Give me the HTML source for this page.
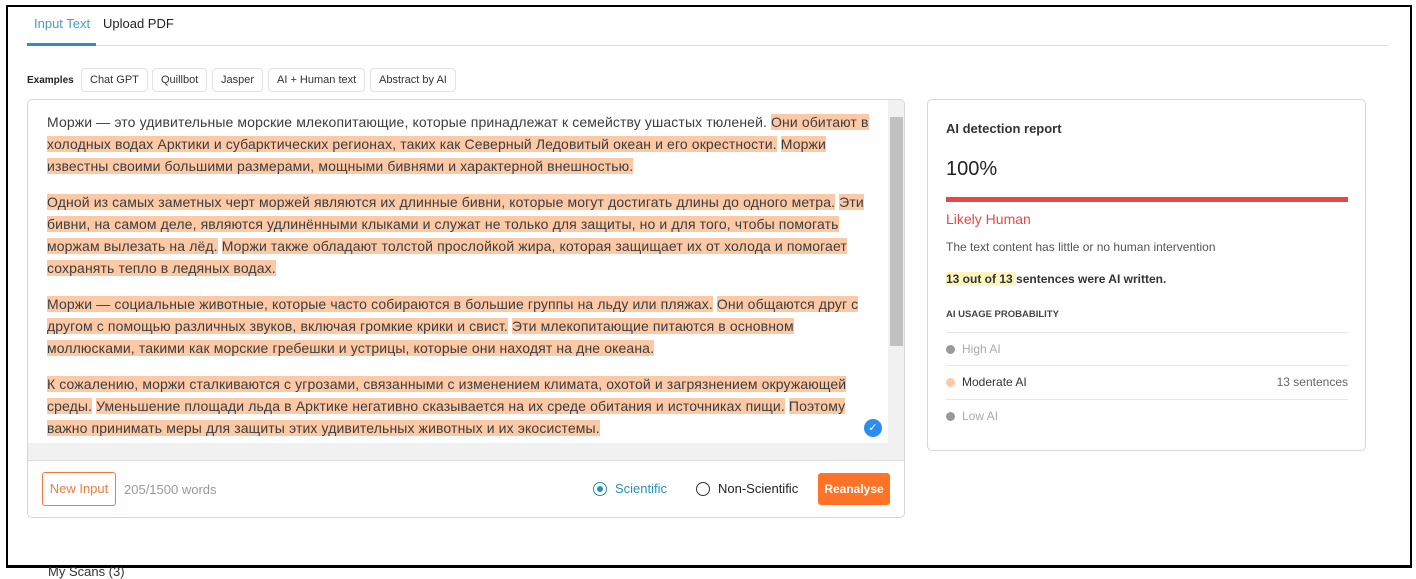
<!DOCTYPE html>
<html><head><meta charset="utf-8"><style>
*{box-sizing:border-box;margin:0;padding:0}
body{width:1416px;height:573px;background:#fff;font-family:"Liberation Sans",sans-serif;position:relative;overflow:hidden;color:#333}
.frame{position:absolute;left:6px;top:5px;width:1406px;height:563px;border:2px solid #000;border-bottom-width:3px}
.tabs{position:absolute;left:27px;top:0;width:1361px;height:46px;border-bottom:1px solid #ddd}
.tab{position:absolute;top:16px;font-size:13px}
.t1{left:7px;color:#4a9cc0}
.t2{left:76px;color:#222}
.uline{position:absolute;left:27px;top:43px;width:69px;height:3px;background:#2b91b8}
.ex{position:absolute;top:68px;height:24px;border:1px solid #e3e3e3;border-radius:4px;font-size:11px;color:#333;line-height:22px;padding:0 8px}
.exl{position:absolute;left:27px;top:75px;font-size:10px;font-weight:bold;color:#222}
.box{position:absolute;left:27px;top:99px;width:878px;height:419px;border:1px solid #d6d6d6;border-radius:5px;overflow:hidden}
.txt{position:absolute;left:19px;top:11px;font-size:14px;line-height:22px;color:#3d3d3d;white-space:nowrap;letter-spacing:0.12px}
.txt p{margin-bottom:14px}
.h{background:#fcc9a6}
.vs{position:absolute;left:860px;top:0;width:16px;height:343px;background:#f1f1f1}
.thumb{position:absolute;left:2px;top:17px;width:13px;height:229px;background:#c1c1c1}
.hs{position:absolute;left:0;top:343px;width:876px;height:18px;background:#f1f1f1;border-bottom:1px solid #ddd}
.chk{position:absolute;left:836px;top:319px;width:18px;height:18px;border-radius:50%;background:#2d8cf0;color:#fff;font-size:11px;text-align:center;line-height:18px}
.btn1{position:absolute;left:14px;top:372px;width:74px;height:34px;border:1px solid #f47a3c;border-radius:3px;color:#f47a3c;font-size:13px;text-align:center;line-height:32px}
.words{position:absolute;left:96px;top:382px;font-size:13px;color:#999}
.radio{position:absolute;top:382px;width:14px;height:14px;border-radius:50%;border:1px solid #333}
.lab{position:absolute;top:381px;font-size:13px}
.rean{position:absolute;left:790px;top:373px;width:72px;height:32px;background:#ff7326;border-radius:3px;color:#fff;font-size:12px;font-weight:bold;text-align:center;line-height:32px}
.rp{position:absolute;left:927px;top:99px;width:439px;height:352px;border:1px solid #d6d6d6;border-radius:5px}
.rp .a{position:absolute;left:18px}
.row{position:absolute;left:18px;width:402px;border-top:1px solid #e6e6e6;height:33px;font-size:12px;line-height:33px}
.dot{display:inline-block;width:9px;height:9px;border-radius:50%;margin-right:7px;vertical-align:-1px}
</style></head><body>
<div class="tabs"><span class="tab t1">Input Text</span><span class="tab t2">Upload PDF</span></div>
<div class="uline"></div>
<div class="exl">Examples</div>
<div class="ex" style="left:81px">Chat GPT</div>
<div class="ex" style="left:152px">Quillbot</div>
<div class="ex" style="left:212px">Jasper</div>
<div class="ex" style="left:268px">AI + Human text</div>
<div class="ex" style="left:370px">Abstract by AI</div>
<div class="box">
<div class="txt">
<p>Моржи — это удивительные морские млекопитающие, которые принадлежат к семейству ушастых тюленей. <span class="h">Они обитают в</span><br><span class="h">холодных водах Арктики и субарктических регионах, таких как Северный Ледовитый океан и его окрестности.</span> <span class="h">Моржи</span><br><span class="h">известны своими большими размерами, мощными бивнями и характерной внешностью.</span></p>
<p><span class="h">Одной из самых заметных черт моржей являются их длинные бивни, которые могут достигать длины до одного метра.</span> <span class="h">Эти</span><br><span class="h">бивни, на самом деле, являются удлинёнными клыками и служат не только для защиты, но и для того, чтобы помогать</span><br><span class="h">моржам вылезать на лёд.</span> <span class="h">Моржи также обладают толстой прослойкой жира, которая защищает их от холода и помогает</span><br><span class="h">сохранять тепло в ледяных водах.</span></p>
<p><span class="h">Моржи — социальные животные, которые часто собираются в большие группы на льду или пляжах.</span> <span class="h">Они общаются друг с</span><br><span class="h">другом с помощью различных звуков, включая громкие крики и свист.</span> <span class="h">Эти млекопитающие питаются в основном</span><br><span class="h">моллюсками, такими как морские гребешки и устрицы, которые они находят на дне океана.</span></p>
<p><span class="h">К сожалению, моржи сталкиваются с угрозами, связанными с изменением климата, охотой и загрязнением окружающей</span><br><span class="h">среды.</span> <span class="h">Уменьшение площади льда в Арктике негативно сказывается на их среде обитания и источниках пищи.</span> <span class="h">Поэтому</span><br><span class="h">важно принимать меры для защиты этих удивительных животных и их экосистемы.</span></p>
</div>
<div class="vs"><div class="thumb"></div></div>
<div class="hs"></div>
<div class="chk">✓</div>
<div class="btn1">New Input</div>
<div class="words">205/1500 words</div>
<div class="radio" style="left:565px;border-color:#2b91b8"><div style="position:absolute;left:3px;top:3px;width:6px;height:6px;border-radius:50%;background:#2b91b8"></div></div>
<div class="lab" style="left:587px;color:#2b91b8">Scientific</div>
<div class="radio" style="left:668px"></div>
<div class="lab" style="left:690px;color:#222">Non-Scientific</div>
<div class="rean">Reanalyse</div>
</div>
<div class="rp">
<div class="a" style="top:21px;font-size:13px;font-weight:bold;color:#333">AI detection report</div>
<div class="a" style="top:58px;font-size:20px;color:#222">100%</div>
<div class="a" style="top:97px;width:402px;height:5px;background:#e94747"></div>
<div class="a" style="top:111px;font-size:14px;color:#e94747">Likely Human</div>
<div class="a" style="top:140px;font-size:12px;color:#555">The text content has little or no human intervention</div>
<div class="a" style="top:172px;font-size:12px;color:#333;font-weight:bold"><span style="background:#fdf5c0">13 out of 13 </span>sentences were AI written.</div>
<div class="a" style="top:209px;font-size:9.5px;font-weight:bold;color:#444">AI USAGE PROBABILITY</div>
<div class="row" style="top:232px;color:#aaa"><span class="dot" style="background:#999"></span>High AI</div>
<div class="row" style="top:265px;color:#333"><span class="dot" style="background:#fcc9a6"></span>Moderate AI<span style="float:right;color:#666">13 sentences</span></div>
<div class="row" style="top:299px;color:#aaa"><span class="dot" style="background:#999"></span>Low AI</div>
</div>
<div class="frame"></div>
<div style="position:absolute;left:48px;top:564px;font-size:13px;color:#333">My Scans (3)</div>
</body></html>
